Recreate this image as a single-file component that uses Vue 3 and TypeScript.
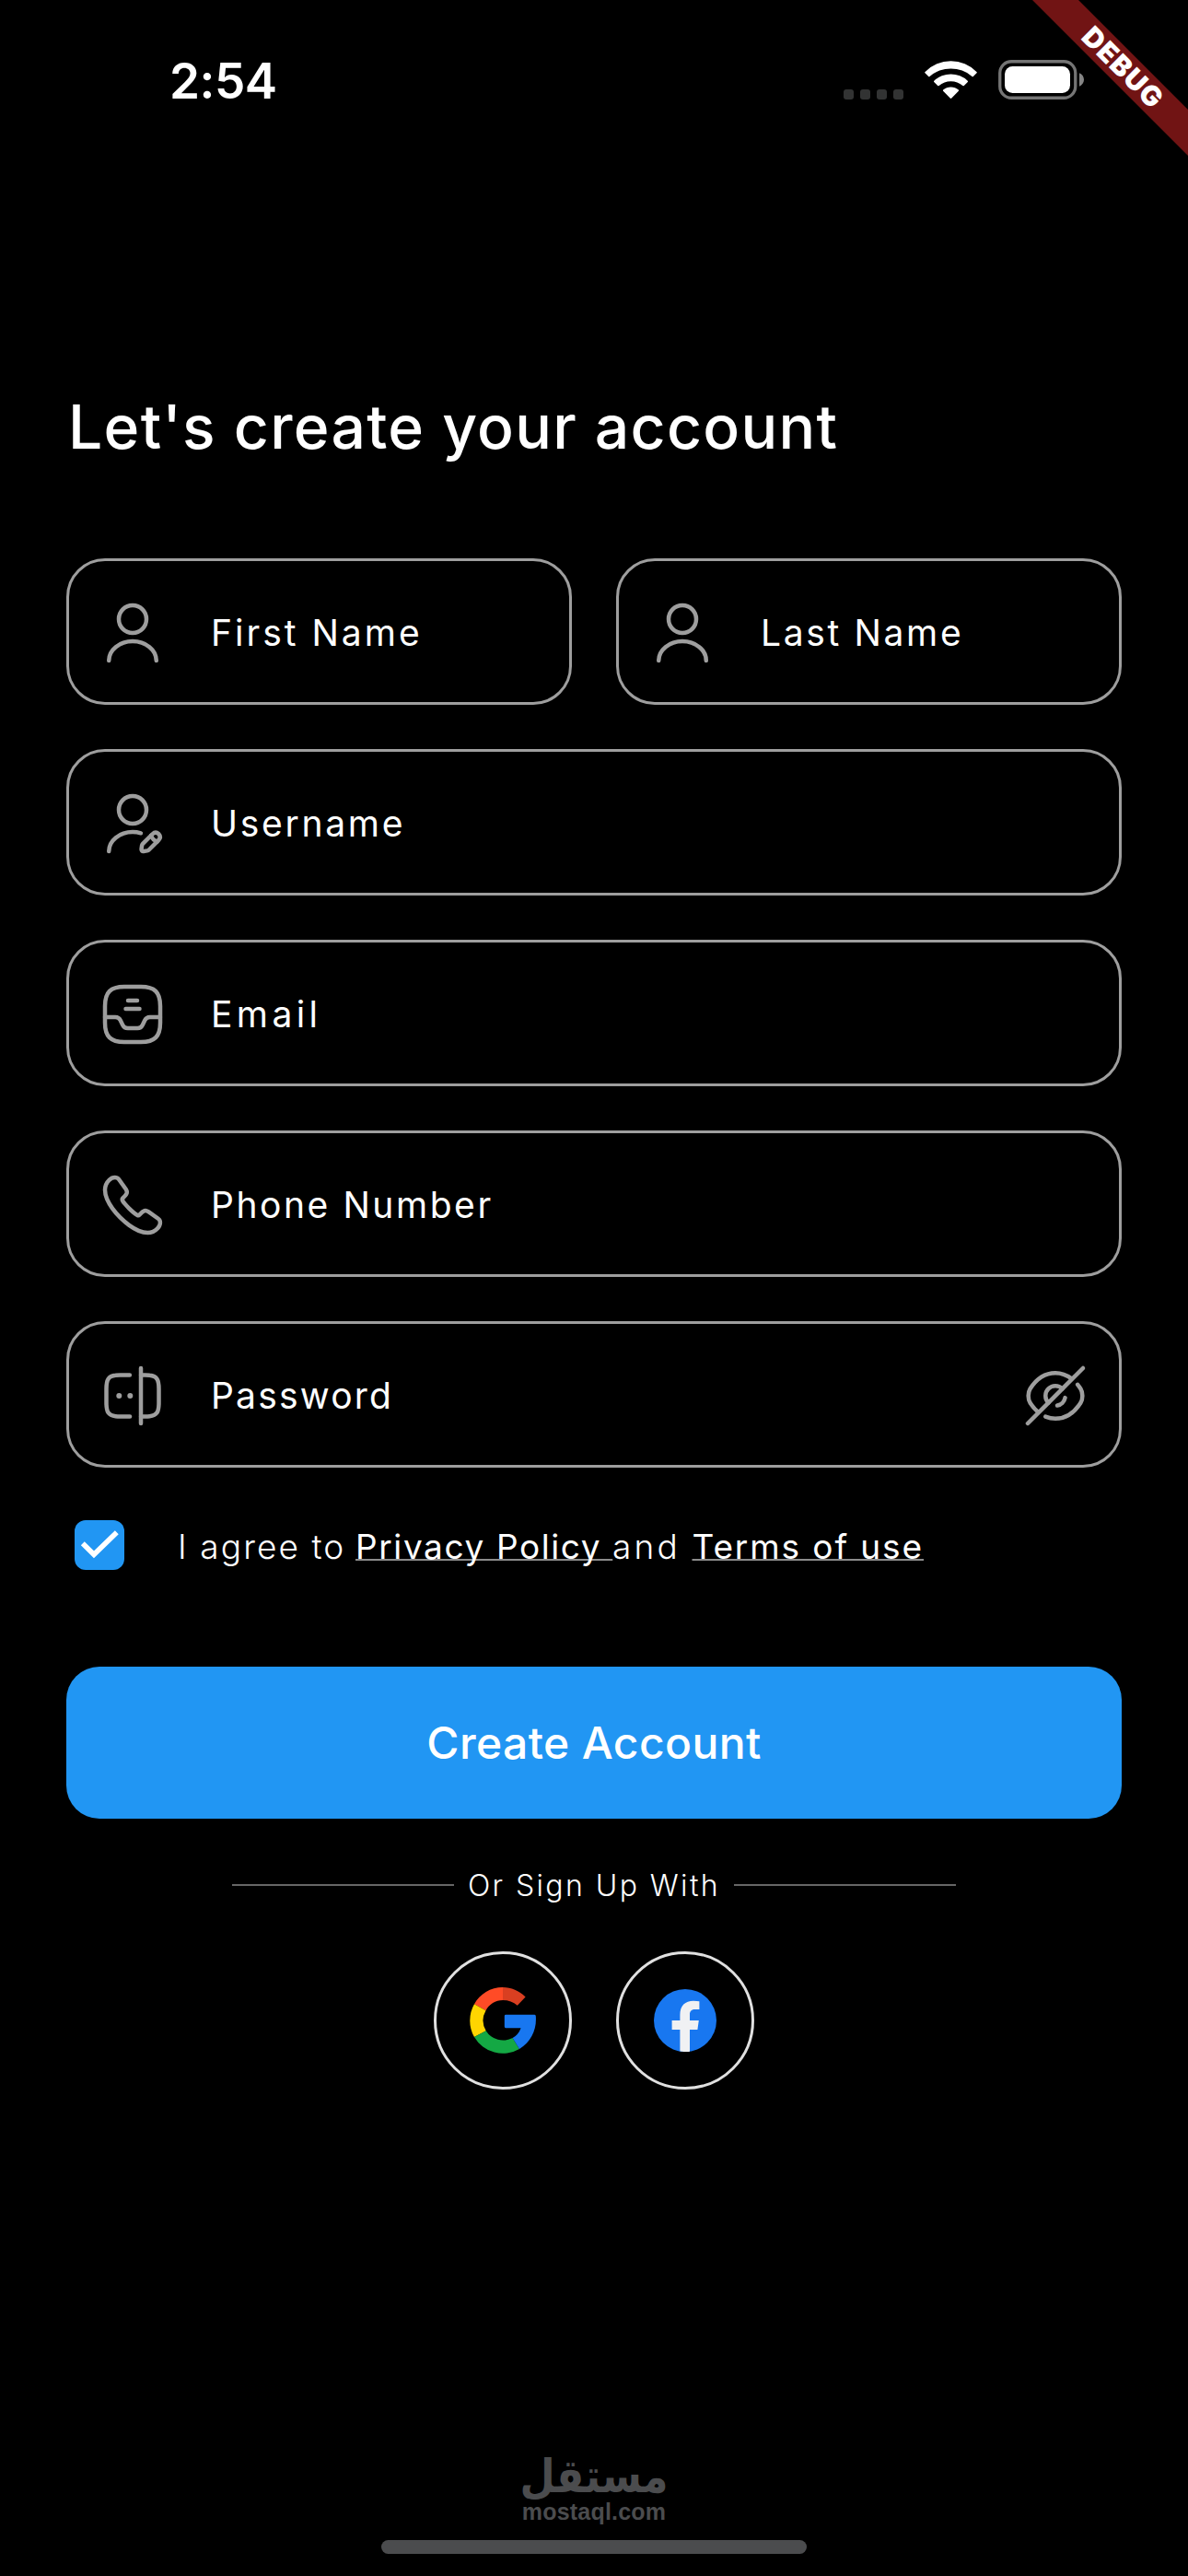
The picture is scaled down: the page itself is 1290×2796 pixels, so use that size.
<script setup lang="ts">
import { ref } from 'vue'

interface Field {
  label: string
  spacing: number
  paths: string[]
  dots?: [number, number][]
  half?: boolean
  secret?: boolean
}

const head = 'M12 12C14.76 12 17 9.76 17 7C17 4.24 14.76 2 12 2C9.24 2 7 4.24 7 7C7 9.76 9.24 12 12 12Z'
const user = [head, 'M20.59 22C20.59 18.13 16.74 15 12 15C7.26 15 3.41 18.13 3.41 22']

const fields: Field[] = [
  { label: 'First Name', spacing: 3, paths: user, half: true },
  { label: 'Last Name', spacing: 2.65, paths: user, half: true },
  {
    label: 'Username',
    spacing: 2.7,
    paths: [
      head,
      'M3.41 22C3.41 18.13 7.26 15 12 15C13.04 15 14.04 15.15 14.97 15.43',
      'M19.21 15.74L15.67 19.28C15.53 19.42 15.4 19.68 15.37 19.87L15.18 21.22C15.11 21.71 15.45 22.05 15.94 21.98L17.29 21.79C17.48 21.76 17.75 21.63 17.88 21.49L21.42 17.95C22.03 17.34 22.32 16.63 21.42 15.73C20.53 14.84 19.82 15.13 19.21 15.74Z',
      'M18.7 16.25C19 17.33 19.84 18.17 20.92 18.47',
    ],
  },
  {
    label: 'Email',
    spacing: 4.4,
    paths: [
      'M9 22H15C20 22 22 20 22 15V9C22 4 20 2 15 2H9C4 2 2 4 2 9V15C2 20 4 22 9 22Z',
      'M2 13H5.76C6.52 13 7.21 13.43 7.55 14.11L8.44 15.9C9 17 10 17 10.24 17H13.77C14.53 17 15.22 16.57 15.56 15.89L16.45 14.1C16.79 13.42 17.48 12.99 18.24 12.99H21.98',
      'M10.34 7H13.67',
      'M9.5 10H14.5',
    ],
  },
  {
    label: 'Phone Number',
    spacing: 2.55,
    paths: [
      'M21.97 18.33C21.97 18.69 21.89 19.06 21.72 19.42C21.55 19.78 21.33 20.12 21.04 20.44C20.55 20.98 20.01 21.37 19.4 21.62C18.8 21.87 18.15 22 17.45 22C16.43 22 15.34 21.76 14.19 21.27C13.04 20.78 11.89 20.12 10.75 19.29C9.6 18.45 8.51 17.52 7.47 16.49C6.44 15.45 5.51 14.36 4.68 13.22C3.86 12.08 3.2 10.94 2.72 9.81C2.24 8.67 2 7.58 2 6.54C2 5.86 2.12 5.21 2.36 4.61C2.6 4 2.98 3.44 3.51 2.94C4.15 2.31 4.85 2 5.59 2C5.87 2 6.15 2.06 6.4 2.18C6.66 2.3 6.89 2.48 7.07 2.74L9.39 6.01C9.57 6.26 9.7 6.49 9.79 6.71C9.88 6.92 9.93 7.13 9.93 7.32C9.93 7.56 9.86 7.8 9.72 8.03C9.59 8.26 9.4 8.5 9.16 8.74L8.4 9.53C8.29 9.64 8.24 9.77 8.24 9.93C8.24 10.01 8.25 10.08 8.27 10.16C8.3 10.24 8.33 10.3 8.35 10.36C8.53 10.69 8.84 11.12 9.28 11.64C9.73 12.16 10.21 12.69 10.73 13.22C11.27 13.75 11.79 14.24 12.32 14.69C12.84 15.13 13.27 15.43 13.61 15.61C13.66 15.63 13.72 15.66 13.79 15.69C13.87 15.72 13.95 15.73 14.04 15.73C14.21 15.73 14.34 15.67 14.45 15.56L15.21 14.81C15.46 14.56 15.7 14.37 15.93 14.25C16.16 14.11 16.39 14.04 16.64 14.04C16.83 14.04 17.03 14.08 17.25 14.17C17.47 14.26 17.7 14.39 17.95 14.56L21.26 16.91C21.52 17.09 21.7 17.3 21.81 17.55C21.91 17.8 21.97 18.05 21.97 18.33Z',
    ],
  },
  {
    label: 'Password',
    spacing: 2.2,
    paths: [
      'M11.02 19.5H7.5C6.88 19.5 6.33 19.48 5.84 19.41C3.21 19.12 2.5 17.88 2.5 14.5V9.5C2.5 6.12 3.21 4.88 5.84 4.59C6.33 4.52 6.88 4.5 7.5 4.5H10.96',
      'M15.02 4.5H16.5C17.12 4.5 17.67 4.52 18.16 4.59C20.79 4.88 21.5 6.12 21.5 9.5V14.5C21.5 17.88 20.79 19.12 18.16 19.41C17.67 19.48 17.12 19.5 16.5 19.5H15.02',
      'M15 2V22',
    ],
    dots: [
      [7.1, 12],
      [11.1, 12],
    ],
    secret: true,
  },
]

const eyeSlash = [
  'M14.53 9.47L9.47 14.53C8.82 13.88 8.42 12.99 8.42 12C8.42 10.02 10.02 8.42 12 8.42C12.99 8.42 13.88 8.82 14.53 9.47Z',
  'M17.82 5.77C16.07 4.45 14.07 3.73 12 3.73C8.47 3.73 5.18 5.81 2.89 9.41C1.99 10.82 1.99 13.19 2.89 14.6C3.68 15.84 4.6 16.91 5.6 17.77',
  'M8.42 19.53C9.56 20.01 10.77 20.27 12 20.27C15.53 20.27 18.82 18.19 21.11 14.59C22.01 13.18 22.01 10.81 21.11 9.4C20.78 8.88 20.42 8.39 20.05 7.93',
  'M15.51 12.7C15.25 14.11 14.1 15.26 12.69 15.52',
  'M9.47 14.53L2 22',
  'M22 2L14.53 9.47',
]

const agreed = ref(true)
</script>

<template>
  <div class="screen">
    <header class="status">
      <span class="time">2:54</span>
      <div class="indicators">
        <div class="cellular"><i v-for="n in 4" :key="n"></i></div>
        <svg width="57" height="43" viewBox="0 0 57 43" fill="#fff">
          <path d="M0.6 12.9A39 39 0 0 1 56.4 12.9Q57.2 13.6 56.5 14.3L52.8 18Q52.2 18.5 51.5 17.9A35.5 35.5 0 0 0 5.5 17.9Q4.8 18.5 4.2 18L0.5 14.3Q-0.2 13.6 0.6 12.9Z" />
          <path d="M10.3 22.7A26.5 26.5 0 0 1 46.7 22.7Q47.4 23.3 46.8 23.9L42.8 28Q42.1 28.7 41.4 28A20 20 0 0 0 15.6 28Q14.9 28.7 14.2 28L10.2 23.9Q9.6 23.3 10.3 22.7Z" />
          <path d="M20.2 32.6A12.5 12.5 0 0 1 36.8 32.6Q37.5 33.2 36.9 33.8L29.3 41.6Q28.5 42.3 27.7 41.6L20.1 33.8Q19.5 33.2 20.2 32.6Z" />
        </svg>
        <svg width="93" height="43" viewBox="0 0 93 43">
          <rect x="1.75" y="1.75" width="82" height="39.5" rx="12.5" fill="none" stroke="#757575" stroke-width="3.3" />
          <rect x="7" y="7" width="71" height="29" rx="8.5" fill="#fff" />
          <path d="M88 14.3C91 15.5 93 18.3 93 21.5C93 24.7 91 27.5 88 28.7Z" fill="#858585" />
        </svg>
      </div>
    </header>

    <svg class="ribbon" width="170" height="170" viewBox="0 0 170 170">
      <path d="M1 0H51L170 119V169Z" fill="#711414" />
      <text transform="translate(99.8 73.2) rotate(45)" x="0" y="11" text-anchor="middle">DEBUG</text>
    </svg>

    <main>
      <h1>Let's create your account</h1>

      <div class="form">
        <label v-for="f in fields" :key="f.label" class="field" :class="{ half: f.half }">
          <svg class="icon" viewBox="0 0 24 24">
            <path v-for="d in f.paths" :key="d" :d="d" />
            <circle v-for="p in f.dots ?? []" :key="p[0]" :cx="p[0]" :cy="p[1]" r="1" class="dot" />
          </svg>
          <span class="label" :style="{ letterSpacing: f.spacing + 'px' }">{{ f.label }}</span>
          <svg v-if="f.secret" class="icon" viewBox="0 0 24 24">
            <path v-for="d in eyeSlash" :key="d" :d="d" />
          </svg>
        </label>
      </div>

      <div class="terms">
        <div class="checkbox" role="checkbox" :aria-checked="agreed" @click="agreed = !agreed">
          <svg v-if="agreed" width="54" height="54" viewBox="0 0 54 54">
            <path d="M8.8 25.2L21 37.3L45.8 13.2" fill="none" stroke="#fff" stroke-width="5.6" />
          </svg>
        </div>
        <p>
          <span class="lead">I agree to </span><a class="privacy">Privacy Policy </a><span class="and">and </span><a class="use">Terms of use</a>
        </p>
      </div>

      <button type="button" class="submit">Create Account</button>

      <div class="divider"><i></i><span>Or Sign Up With</span><i></i></div>

      <div class="social">
        <div class="round">
          <svg width="72" height="72" viewBox="-36 -36 72 72">
            <path d="M0 -36C-13.3 -36 -25 -28.8 -31 -17.7L-18.5 -10.8C-14.8 -17.6 -8 -22 0 -22Z" fill="#ff4b26" />
            <path d="M0 -36C9 -36 17.8 -32.3 24.6 -25.6L15.8 -16.3C11.6 -20 6 -22 0 -22Z" fill="#d93f21" />
            <path d="M-31 -17.7A36 36 0 0 0 -31 18L-18.3 11.2A22 22 0 0 1 -18.5 -10.8Z" fill="#ffd500" />
            <path d="M-31 18A36 36 0 0 0 18 31L10.6 19A22 22 0 0 1 -18.3 11.2Z" fill="#14a844" />
            <path d="M3.2 -6.2H34.2Q35.6 -6.2 35.8 -4.8C37 10 31 23 18 31L10.6 19Q17 15.5 19.6 8.2H3.2Q1.8 8.2 1.8 6.8V-4.8Q1.8 -6.2 3.2 -6.2Z" fill="#1877f0" />
          </svg>
        </div>
        <div class="round">
          <svg width="68" height="68" viewBox="-34 -34 68 68">
            <circle r="34" fill="#1877f0" />
            <path d="M-5.6 34V10H-14.4V0H-5.6V-6C-5.6 -16 0 -21.2 9 -21.2Q12.5 -21.2 15.4 -20.7V-11.9H10.5C6.3 -11.9 5 -9.4 5 -6.4V0H14.8L13.4 10H5V33.7Q0 34.4 -5.6 33.6Z" fill="#f0f1f3" />
          </svg>
        </div>
      </div>
    </main>

    <footer>
      <div class="brand">
        <div class="brand-ar" lang="ar">مستقل</div>
        <div class="brand-en">mostaql.com</div>
      </div>
      <div class="home-bar"></div>
    </footer>
  </div>
</template>

<style>
body {
  background: #000;
}
</style>

<style scoped>
.screen {
  position: relative;
  display: flex;
  flex-direction: column;
  width: 1290px;
  height: 2796px;
  overflow: hidden;
  background: #000;
  color: #fff;
  font-family: Inter, "Liberation Sans", sans-serif;
}

.status {
  display: flex;
  align-items: center;
  justify-content: space-between;
  height: 173px;
  padding: 0 113px 0 184px;
}

.time {
  padding-top: 3px;
  font-size: 53px;
  font-weight: 600;
  letter-spacing: -0.5px;
}

.indicators {
  display: flex;
  align-items: center;
  gap: 23px;
}

.cellular {
  display: flex;
  align-items: flex-end;
  gap: 7px;
  height: 42px;
}

.cellular i {
  width: 11px;
  height: 11px;
  border-radius: 3px;
  background: #323333;
}

.ribbon {
  position: absolute;
  top: 0;
  right: 0;
}

.ribbon text {
  font: 900 30px Inter, sans-serif;
  letter-spacing: 1.3px;
  fill: #fff;
}

main {
  padding: 250px 72px 0;
}

h1 {
  margin: 0 0 103px 2px;
  font-size: 66px;
  font-weight: 500;
  line-height: 80px;
  letter-spacing: 1.27px;
  white-space: nowrap;
}

.form {
  display: flex;
  flex-wrap: wrap;
  gap: 48px;
}

.field {
  box-sizing: border-box;
  display: flex;
  align-items: center;
  width: 100%;
  height: 159px;
  padding: 3px 33px 0;
  border: 3px solid #9e9e9e;
  border-radius: 42px;
}

.field.half {
  width: 549px;
}

.icon {
  flex: none;
  width: 72px;
  height: 72px;
  fill: none;
  stroke: #9e9e9e;
  stroke-width: 1.5;
  stroke-linecap: round;
  stroke-linejoin: round;
}

.dot {
  fill: #9e9e9e;
  stroke: none;
}

.label {
  flex: 1;
  margin-left: 49px;
  font-size: 39px;
  line-height: 46px;
  white-space: nowrap;
}

.terms {
  display: flex;
  align-items: center;
  height: 54px;
  margin: 57px 0 105px;
  padding-left: 9px;
}

.checkbox {
  width: 54px;
  height: 54px;
  border-radius: 12px;
  background: #2196f3;
}

.terms p {
  display: flex;
  margin: 0 0 0 58px;
  padding-top: 3px;
  font-size: 37px;
  line-height: 50px;
  white-space: pre;
}

.lead,
.and {
  font-weight: 300;
}

.lead {
  width: 193px;
  letter-spacing: 2.1px;
}

.and {
  width: 86.5px;
  letter-spacing: 3.2px;
}

.terms a {
  text-decoration: underline #8c8c8c 2px;
  text-underline-offset: 0;
  text-decoration-skip-ink: none;
}

.privacy {
  width: 279px;
  letter-spacing: 1.6px;
}

.use {
  letter-spacing: 1.9px;
}

.submit {
  display: block;
  width: 100%;
  height: 165px;
  padding: 0;
  border: 0;
  border-radius: 36px;
  background: #2196f3;
  color: #fff;
  font: 500 48px/58px Inter, sans-serif;
  letter-spacing: 0.4px;
}

.divider {
  display: flex;
  align-items: center;
  justify-content: space-between;
  height: 60px;
  margin-top: 42px;
  padding: 0 180px;
}

.divider i {
  width: 241px;
  height: 2px;
  background: #666;
}

.divider span {
  font-size: 32px;
  font-weight: 300;
  letter-spacing: 2.4px;
}

.social {
  display: flex;
  justify-content: center;
  gap: 48px;
  margin-top: 42px;
}

.round {
  box-sizing: border-box;
  display: flex;
  align-items: center;
  justify-content: center;
  width: 150px;
  height: 150px;
  border: 3px solid #e0e0e0;
  border-radius: 50%;
}

footer {
  display: flex;
  flex-direction: column;
  align-items: center;
  margin-top: auto;
  padding-bottom: 24px;
  color: #4b4c4e;
}

.brand {
  display: flex;
  flex-direction: column;
  align-items: center;
}

.brand-ar {
  font: 700 44px/60px "DejaVu Sans", sans-serif;
  transform: scaleY(1.14);
  transform-origin: 50% 75%;
}

.brand-en {
  margin: -12px 0 13px;
  font: 700 25px/36px "Liberation Sans", Arial, sans-serif;
  letter-spacing: 0.2px;
}

.home-bar {
  width: 462px;
  height: 15px;
  border-radius: 8px;
  background: #4b4c4e;
}
</style>
